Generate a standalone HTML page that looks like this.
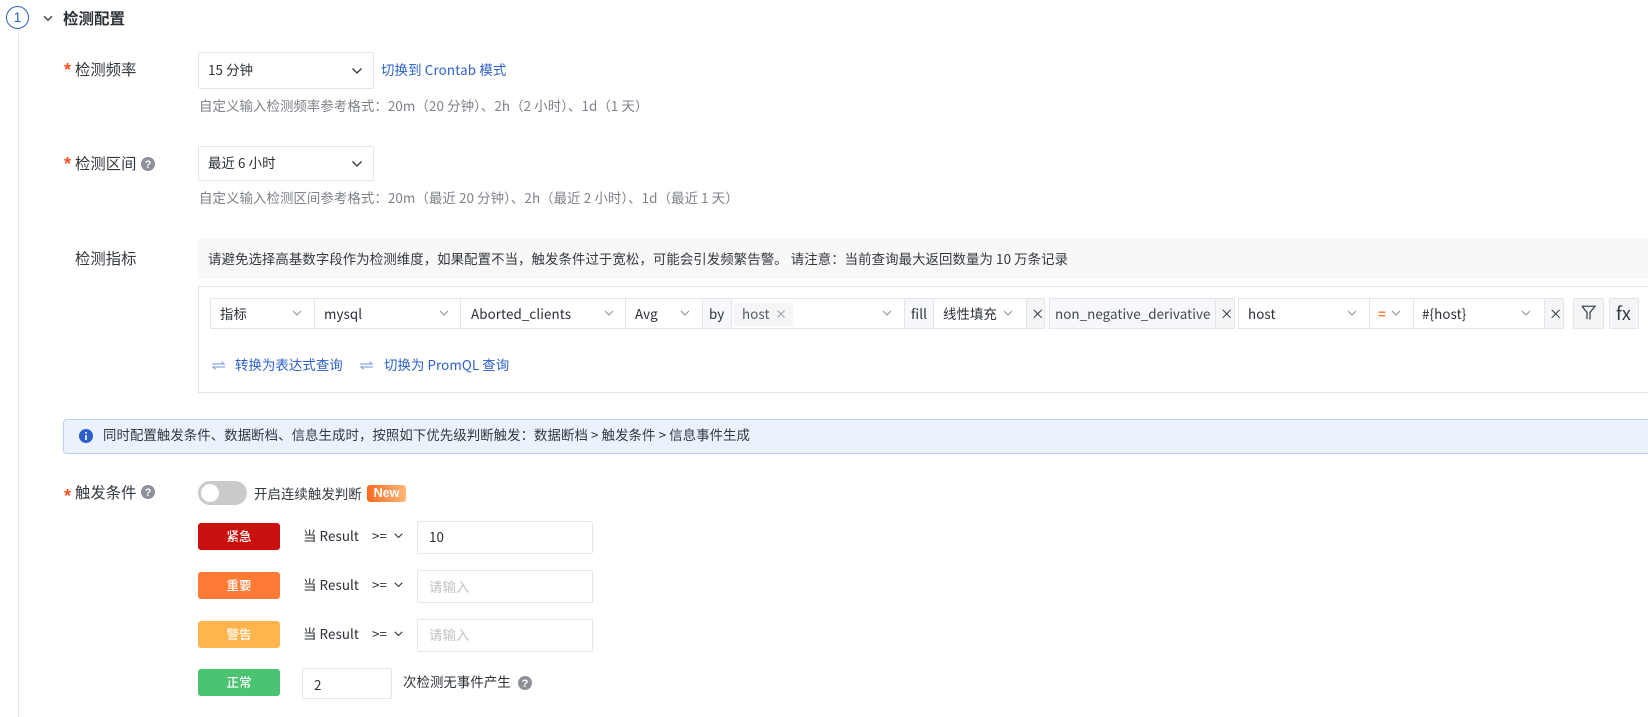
<!DOCTYPE html>
<html lang="zh">
<head>
<meta charset="utf-8">
<title>检测配置</title>
<style>
html,body{margin:0;padding:0;background:#fff}
body{width:1648px;height:717px;position:relative;overflow:hidden;font-family:"Liberation Sans","Noto Sans CJK SC",sans-serif;color:#2b3036;font-size:13.4px}
.a{position:absolute;white-space:nowrap}
.t{position:absolute;white-space:nowrap;line-height:20px;font-size:13.4px;letter-spacing:.08px;font-family:"Noto Sans CJK SC","Liberation Sans",sans-serif}
.box{position:absolute;box-sizing:border-box;background:#fff;border:1px solid #e3e5ea}
.sel{border-radius:2px}
.cell{position:absolute;box-sizing:border-box;border:1px solid #e3e5ea;height:31px;top:298px;background:#fff}
.g{background:#f4f5f7}
.l{background:#f7f8fb}
.lbl{font-size:15.3px;color:#33383e}
.star{position:absolute;left:64px;font:bold 18px/20px "Liberation Sans",sans-serif;color:#f4511e}
.help{color:#7d8288}
.link{color:#2c5fc9}
.btn{position:absolute;left:198px;width:82px;height:27px;border-radius:3px;color:#fff;text-align:center;font-size:12.5px;line-height:26px;font-weight:500;font-family:"Noto Sans CJK SC",sans-serif}
svg{position:absolute;overflow:visible}
</style>
</head>
<body>
<!-- step -->
<div class="a" style="left:6px;top:6px;width:23px;height:23px;box-sizing:border-box;border:1px solid #2c5fc9;border-radius:50%;text-align:center;line-height:21px;color:#2c5fc9;font-size:14px">1</div>
<div class="a" style="left:18px;top:33px;width:1px;height:684px;background:#e3e5ea"></div>
<svg style="left:43px;top:15px" width="10" height="7" viewBox="0 0 10 7"><path d="M1 1.2 5 5.2 9 1.2" fill="none" stroke="#33383e" stroke-width="1.3"/></svg>
<div class="t" style="left:63px;top:8px;font-size:15.5px;font-weight:700;color:#2b3036;letter-spacing:0">检测配置</div>

<!-- frequency -->
<div class="star" style="top:60px">*</div>
<div class="t lbl" style="left:75px;top:59px">检测频率</div>
<div class="box sel" style="left:198px;top:52px;width:176px;height:37px"></div>
<div class="t" style="left:208px;top:59px">15 分钟</div>
<svg style="left:351px;top:67px" width="12" height="8" viewBox="0 0 12 8"><path d="M1.5 1.5 6 6 10.5 1.5" fill="none" stroke="#33383e" stroke-width="1.3"/></svg>
<div class="t link" style="left:381px;top:59px;letter-spacing:.15px">切换到 Crontab 模式</div>
<div class="t help" style="left:199px;top:95px;letter-spacing:.1px">自定义输入检测频率参考格式：20m（20 分钟）、2h（2 小时）、1d（1 天）</div>

<!-- range -->
<div class="star" style="top:154px">*</div>
<div class="t lbl" style="left:75px;top:153px">检测区间</div>
<svg style="left:141px;top:157px" width="14" height="14" viewBox="0 0 14 14"><circle cx="7" cy="7" r="7" fill="#8c9096"/><text x="7" y="11" text-anchor="middle" font-size="11" font-weight="700" fill="#fff" font-family="Liberation Sans">?</text></svg>
<div class="box sel" style="left:198px;top:146px;width:176px;height:35px"></div>
<div class="t" style="left:208px;top:152px">最近 6 小时</div>
<svg style="left:351px;top:160px" width="12" height="8" viewBox="0 0 12 8"><path d="M1.5 1.5 6 6 10.5 1.5" fill="none" stroke="#33383e" stroke-width="1.3"/></svg>
<div class="t help" style="left:199px;top:187px;letter-spacing:.1px">自定义输入检测区间参考格式：20m（最近 20 分钟）、2h（最近 2 小时）、1d（最近 1 天）</div>

<!-- metric -->
<div class="t lbl" style="left:75px;top:248px">检测指标</div>
<div class="a" style="left:198px;top:239px;width:1450px;height:40px;background:#f8f8f9"></div>
<div class="t" style="left:208px;top:248px;color:#33383e;letter-spacing:.09px">请避免选择高基数字段作为检测维度，如果配置不当，触发条件过于宽松，可能会引发频繁告警。 请注意：当前查询最大返回数量为 10 万条记录</div>
<div class="box" style="left:198px;top:286px;width:1460px;height:107px"></div>

<div class="cell" style="left:210px;width:105px"></div>
<div class="t" style="left:220px;top:303px">指标</div>
<div class="cell" style="left:314px;width:147px"></div>
<div class="t" style="left:324px;top:303px">mysql</div>
<div class="cell" style="left:460px;width:166px"></div>
<div class="t" style="left:471px;top:303px">Aborted_clients</div>
<div class="cell" style="left:625px;width:78px"></div>
<div class="t" style="left:635px;top:303px">Avg</div>
<div class="cell l" style="left:702px;width:30px"></div>
<div class="t" style="left:709px;top:303px">by</div>
<div class="cell" style="left:731px;width:174px"></div>
<div class="a" style="left:734px;top:303px;width:59px;height:23px;background:#f4f5f6;border-radius:3px"></div>
<div class="t" style="left:742px;top:303px;color:#555a61">host</div>
<svg style="left:777px;top:310px" width="8" height="8" viewBox="0 0 8 8"><path d="M.5 .5 7.5 7.5M7.5 .5 .5 7.5" stroke="#9a9ea4" stroke-width="1"/></svg>
<div class="cell l" style="left:904px;width:30px"></div>
<div class="t" style="left:911px;top:303px">fill</div>
<div class="cell" style="left:933px;width:94px"></div>
<div class="t" style="left:943px;top:303px">线性填充</div>
<div class="cell g" style="left:1026px;width:19px"></div>
<div class="t" style="left:1031px;top:303px">×</div>
<div class="cell l" style="left:1049px;width:167px"></div>
<div class="t" style="left:1055px;top:303px;color:#43484e;letter-spacing:.05px">non_negative_derivative</div>
<div class="cell g" style="left:1215px;width:20px"></div>
<div class="t" style="left:1220px;top:303px">×</div>
<div class="cell" style="left:1238px;width:132px"></div>
<div class="t" style="left:1248px;top:303px">host</div>
<div class="cell" style="left:1369px;width:45px"></div>
<div class="t" style="left:1378px;top:303px;font-weight:700;color:#ff7a30">=</div>
<div class="cell" style="left:1413px;width:132px"></div>
<div class="t" style="left:1422px;top:303px">#{host}</div>
<div class="cell g" style="left:1544px;width:20px"></div>
<div class="t" style="left:1549px;top:303px">×</div>
<div class="cell g" style="left:1573px;width:31px;border-radius:2px"></div>
<svg style="left:1581px;top:305px" width="15" height="16" viewBox="0 0 15 16"><path d="M1 1.2H14L9 7.5V14.5M6 14V7.5L1 1.2" fill="none" stroke="#33383e" stroke-width="1.2"/></svg>
<div class="cell g" style="left:1609px;width:30px;border-radius:2px"></div>
<div class="t" style="left:1616px;top:303px;font-size:18px;color:#33383e">fx</div>

<svg style="left:292px;top:310px" width="10" height="7" viewBox="0 0 10 7"><path d="M1 1 5 5 9 1" fill="none" stroke="#8c9096"/></svg>
<svg style="left:439px;top:310px" width="10" height="7" viewBox="0 0 10 7"><path d="M1 1 5 5 9 1" fill="none" stroke="#8c9096"/></svg>
<svg style="left:604px;top:310px" width="10" height="7" viewBox="0 0 10 7"><path d="M1 1 5 5 9 1" fill="none" stroke="#8c9096"/></svg>
<svg style="left:680px;top:310px" width="10" height="7" viewBox="0 0 10 7"><path d="M1 1 5 5 9 1" fill="none" stroke="#8c9096"/></svg>
<svg style="left:882px;top:310px" width="10" height="7" viewBox="0 0 10 7"><path d="M1 1 5 5 9 1" fill="none" stroke="#8c9096"/></svg>
<svg style="left:1003px;top:310px" width="10" height="7" viewBox="0 0 10 7"><path d="M1 1 5 5 9 1" fill="none" stroke="#8c9096"/></svg>
<svg style="left:1347px;top:310px" width="10" height="7" viewBox="0 0 10 7"><path d="M1 1 5 5 9 1" fill="none" stroke="#8c9096"/></svg>
<svg style="left:1391px;top:310px" width="10" height="7" viewBox="0 0 10 7"><path d="M1 1 5 5 9 1" fill="none" stroke="#8c9096"/></svg>
<svg style="left:1521px;top:310px" width="10" height="7" viewBox="0 0 10 7"><path d="M1 1 5 5 9 1" fill="none" stroke="#8c9096"/></svg>

<svg style="left:212px;top:361px" width="13" height="9" viewBox="0 0 13 9"><path d="M0 3H12L9.5 .8M13 6H1L3.5 8.2" fill="none" stroke="#6f93dd" stroke-width="1"/></svg>
<div class="t link" style="left:235px;top:354px">转换为表达式查询</div>
<svg style="left:360px;top:361px" width="13" height="9" viewBox="0 0 13 9"><path d="M0 3H12L9.5 .8M13 6H1L3.5 8.2" fill="none" stroke="#6f93dd" stroke-width="1"/></svg>
<div class="t link" style="left:384px;top:354px">切换为 PromQL 查询</div>

<!-- alert -->
<div class="box" style="left:63px;top:419px;width:1600px;height:35px;background:#ecf2fd;border-color:#bdd0f3;border-radius:4px"></div>
<svg style="left:79px;top:429px" width="14" height="14" viewBox="0 0 14 14"><circle cx="7" cy="7" r="7" fill="#2c5fc9"/><rect x="6.2" y="6" width="1.6" height="5" fill="#fff"/><rect x="6.2" y="3" width="1.6" height="1.7" fill="#fff"/></svg>
<div class="t" style="left:103px;top:424px;color:#33383e">同时配置触发条件、数据断档、信息生成时，按照如下优先级判断触发：数据断档 &gt; 触发条件 &gt; 信息事件生成</div>

<!-- trigger -->
<div class="star" style="top:486px">*</div>
<div class="t lbl" style="left:75px;top:482px">触发条件</div>
<svg style="left:141px;top:485px" width="14" height="14" viewBox="0 0 14 14"><circle cx="7" cy="7" r="7" fill="#8c9096"/><text x="7" y="11" text-anchor="middle" font-size="11" font-weight="700" fill="#fff" font-family="Liberation Sans">?</text></svg>
<div class="a" style="left:198px;top:481px;width:49px;height:24px;border-radius:12px;background:#c9cacc"></div>
<div class="a" style="left:201px;top:484px;width:18px;height:18px;border-radius:50%;background:#fff"></div>
<div class="t" style="left:254px;top:483px;color:#33383e">开启连续触发判断</div>
<div class="a" style="left:367px;top:485px;width:39px;height:17px;border-radius:3px;background:linear-gradient(90deg,#fb6a1f,#ffb878);color:#fff;font-size:12.5px;font-weight:700;text-align:center;line-height:17px">New</div>

<div class="btn" style="top:523px;background:#c9100f">紧急</div>
<div class="btn" style="top:572px;background:#ff7a35">重要</div>
<div class="btn" style="top:621px;background:#ffb44d">警告</div>
<div class="btn" style="top:669px;background:#4bc472">正常</div>

<div class="t" style="left:303px;top:525px">当 Result</div>
<div class="t" style="left:372px;top:525px">&gt;=</div>
<svg style="left:394px;top:533px" width="9" height="6" viewBox="0 0 9 6"><path d="M.8 .8 4.5 4.5 8.2 .8" fill="none" stroke="#33383e" stroke-width="1.1"/></svg>
<div class="box sel" style="left:417px;top:521px;width:176px;height:33px"></div>
<div class="t" style="left:429px;top:526px">10</div>

<div class="t" style="left:303px;top:574px">当 Result</div>
<div class="t" style="left:372px;top:574px">&gt;=</div>
<svg style="left:394px;top:582px" width="9" height="6" viewBox="0 0 9 6"><path d="M.8 .8 4.5 4.5 8.2 .8" fill="none" stroke="#33383e" stroke-width="1.1"/></svg>
<div class="box sel" style="left:417px;top:570px;width:176px;height:33px"></div>
<div class="t" style="left:429px;top:576px;color:#bfc1c5">请输入</div>

<div class="t" style="left:303px;top:623px">当 Result</div>
<div class="t" style="left:372px;top:623px">&gt;=</div>
<svg style="left:394px;top:631px" width="9" height="6" viewBox="0 0 9 6"><path d="M.8 .8 4.5 4.5 8.2 .8" fill="none" stroke="#33383e" stroke-width="1.1"/></svg>
<div class="box sel" style="left:417px;top:619px;width:176px;height:33px"></div>
<div class="t" style="left:429px;top:624px;color:#bfc1c5">请输入</div>

<div class="box sel" style="left:302px;top:668px;width:90px;height:31px"></div>
<div class="t" style="left:314px;top:674px">2</div>
<div class="t" style="left:403px;top:671px">次检测无事件产生</div>
<svg style="left:518px;top:676px" width="14" height="14" viewBox="0 0 14 14"><circle cx="7" cy="7" r="7" fill="#8c9096"/><text x="7" y="11" text-anchor="middle" font-size="11" font-weight="700" fill="#fff" font-family="Liberation Sans">?</text></svg>
</body>
</html>
